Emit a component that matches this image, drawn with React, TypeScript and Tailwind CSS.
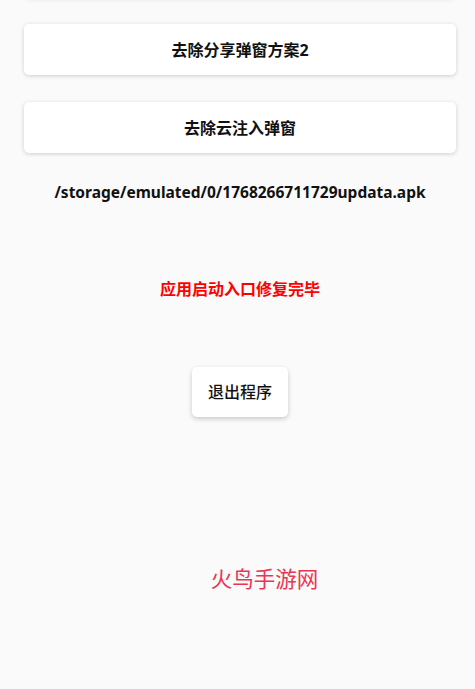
import React from 'react';

const cjk = "font-['Noto_Sans','Noto_Sans_CJK_SC',sans-serif]";

function ActionCard({ label }: { label: string }) {
  return (
    <button className="w-full h-[51px] bg-white rounded-[5px] shadow-[0_1px_4px_rgba(0,0,0,0.18)] flex items-center justify-center text-[16px] font-bold text-[#111]">
      {label}
    </button>
  );
}

export default function App() {
  return (
    <div className={`min-h-screen bg-[#fafafa] overflow-hidden pl-6 pr-[19px] flex flex-col items-center ${cjk}`}>
      {/* card that has scrolled above the top edge */}
      <div className="w-full h-[50px] -mt-[53px] bg-white rounded-[5px] shadow-[0_1px_6px_rgba(0,0,0,0.14)]" />

      <div className="w-full mt-[27px]">
        <ActionCard label="去除分享弹窗方案2" />
      </div>
      <div className="w-full mt-[27px]">
        <ActionCard label="去除云注入弹窗" />
      </div>

      <p className="mt-[27px] leading-6 text-[15.5px] font-bold text-[#111] whitespace-nowrap">
        /storage/emulated/0/1768266711729updata.apk
      </p>

      <p className="mt-[73px] leading-6 text-[16px] font-bold text-[#ff0000]">应用启动入口修复完毕</p>

      <button className="mt-[66px] w-[96px] h-[50px] bg-white rounded-[5px] shadow-[0_2px_5px_rgba(0,0,0,0.2)] text-[16px] font-medium text-[#111]">
        退出程序
      </button>

      <p className="mt-[148px] ml-[49px] leading-7 text-[21.5px] text-[#ec3352]">火鸟手游网</p>
    </div>
  );
}
